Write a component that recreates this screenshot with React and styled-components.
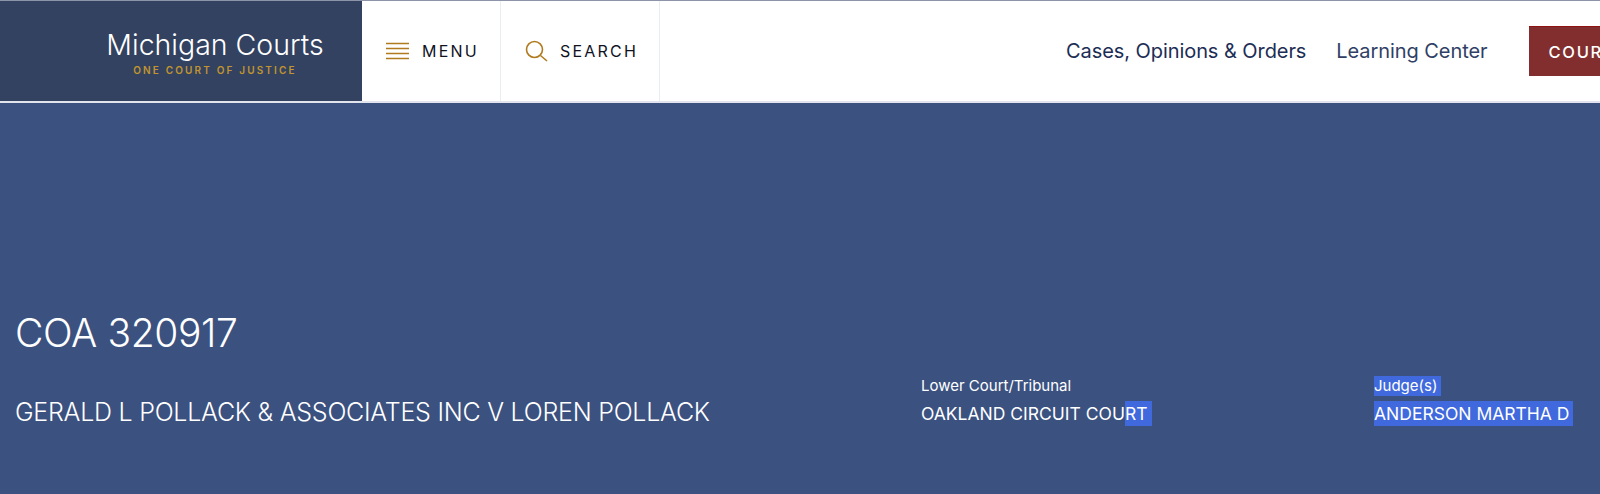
import React from "react";
import styled, { createGlobalStyle } from "styled-components";

const Global = createGlobalStyle`
  html, body { margin: 0; padding: 0; background: #3b5180; }
  body { font-family: Inter, "Liberation Sans", sans-serif; overflow: hidden; }
  #root { width: 1600px; height: 494px; overflow: hidden; }
`;

const Page = styled.div`
  width: 1600px;
  height: 494px;
  display: flex;
  flex-direction: column;
  background: #3b5180;
`;

const Header = styled.header`
  height: 103px;
  box-sizing: border-box;
  display: flex;
  align-items: stretch;
  background: #fff;
  border-top: 1px solid #8d94aa;
  border-bottom: 2px solid #e1e4ed;
`;

const Brand = styled.div`
  width: 362px;
  flex: none;
  box-sizing: border-box;
  padding: 27px 0 0 68px;
  background: #344261;
  display: flex;
  flex-direction: column;
  align-items: center;
`;

const BrandName = styled.div`
  font-family: Inter, sans-serif;
  font-size: 28.5px;
  font-weight: 300;
  line-height: 34px;
  color: #fff;
  white-space: nowrap;
`;

const Tagline = styled.div`
  font-family: Inter, sans-serif;
  font-size: 10px;
  font-weight: 600;
  line-height: 12px;
  margin-top: 2px;
  letter-spacing: 2.15px;
  color: #c1952f;
  white-space: nowrap;
`;

const ToolButton = styled.div`
  width: ${(p) => p.$width}px;
  box-sizing: border-box;
  flex: none;
  display: flex;
  align-items: center;
  gap: ${(p) => p.$gap}px;
  padding-left: ${(p) => p.$pad}px;
  border-right: 1px solid #e9edf4;
  font-family: Inter, sans-serif;
  font-size: 16px;
  font-weight: 400;
  letter-spacing: 2.2px;
  color: #10131f;
`;

const Nav = styled.nav`
  flex: 1;
  display: flex;
  align-items: center;
  min-width: 0;
`;

const NavLink = styled.a`
  font-size: 20px;
  letter-spacing: -0.07px;
  color: ${(p) => p.$color};
  white-space: nowrap;
  margin-left: ${(p) => p.$left}px;
`;

const CourtsButton = styled.div`
  margin-left: 41px;
  flex: none;
  width: 120px;
  height: 50px;
  box-sizing: border-box;
  padding-left: 20px;
  display: flex;
  align-items: center;
  background: #832e2e;
  border-top: 1px solid #8e1414;
  color: #fff;
  font-size: 16.5px;
  font-weight: 500;
  letter-spacing: 1.7px;
  white-space: nowrap;
  overflow: hidden;
`;

const Hero = styled.main`
  flex: 1;
  position: relative;
  display: flex;
  align-items: flex-start;
  padding: 207px 0 0 15px;
  color: #fff;
`;

const CaseColumn = styled.div`
  width: 906px;
  flex: none;
`;

const CaseNumber = styled.h1`
  margin: 0;
  font-family: Inter, sans-serif;
  font-size: 39px;
  font-weight: 300;
  line-height: 46px;
  letter-spacing: -0.4px;
`;

const CaseTitle = styled.div`
  margin-top: 41px;
  font-size: 25px;
  font-weight: 300;
  line-height: 30px;
  letter-spacing: -0.25px;
  white-space: nowrap;
`;

const Meta = styled.div`
  width: ${(p) => p.$width}px;
  flex: none;
  padding-top: 66px;
`;

const MetaLabel = styled.div`
  font-size: 15px;
  line-height: 20px;
  height: 20px;
  white-space: nowrap;
`;

const MetaValue = styled.div`
  margin-top: 5px;
  font-size: 17.5px;
  line-height: 25px;
  height: 25px;
  font-weight: 400;
  white-space: nowrap;
`;

const Selected = styled.span`
  display: inline-block;
  background: #3f69dc;
  padding-right: ${(p) => p.$pad || 0}px;
`;

const MenuIcon = () => (
  <svg width="24" height="20" viewBox="0 0 24 20" fill="none" stroke="#b07a1e" strokeWidth="1.6">
    <path d="M0 2.5H23M0 7.5H23M0 12.5H23M0 17.5H23" />
  </svg>
);

const SearchIcon = () => (
  <svg width="23" height="22" viewBox="0 0 23 22" fill="none" stroke="#b07a1e" strokeWidth="1.6">
    <circle cx="9.5" cy="9.5" r="8" />
    <path d="M15.5 15.5L22 21" />
  </svg>
);

export default function App() {
  return (
    <Page>
      <Global />
      <Header>
        <Brand>
          <BrandName>Michigan Courts</BrandName>
          <Tagline>ONE COURT OF JUSTICE</Tagline>
        </Brand>
        <ToolButton $width={139} $gap={12} $pad={24}>
          <MenuIcon />
          MENU
        </ToolButton>
        <ToolButton $width={159} $gap={12} $pad={24}>
          <SearchIcon />
          SEARCH
        </ToolButton>
        <Nav>
          <NavLink $left={406} $color="#1c2d55">Cases, Opinions &amp; Orders</NavLink>
          <NavLink $left={30} $color="#2f3f66">Learning Center</NavLink>
          <CourtsButton>COURTS</CourtsButton>
        </Nav>
      </Header>
      <Hero>
        <CaseColumn>
          <CaseNumber>COA 320917</CaseNumber>
          <CaseTitle>GERALD L POLLACK &amp; ASSOCIATES INC V LOREN POLLACK</CaseTitle>
        </CaseColumn>
        <Meta $width={453}>
          <MetaLabel>Lower Court/Tribunal</MetaLabel>
          <MetaValue>
            OAKLAND CIRCUIT COU<Selected $pad={4}>RT</Selected>
          </MetaValue>
        </Meta>
        <Meta $width={225}>
          <MetaLabel><Selected $pad={4}>Judge(s)</Selected></MetaLabel>
          <MetaValue>
            <Selected $pad={4}>ANDERSON MARTHA D</Selected>
          </MetaValue>
        </Meta>
      </Hero>
    </Page>
  );
}
